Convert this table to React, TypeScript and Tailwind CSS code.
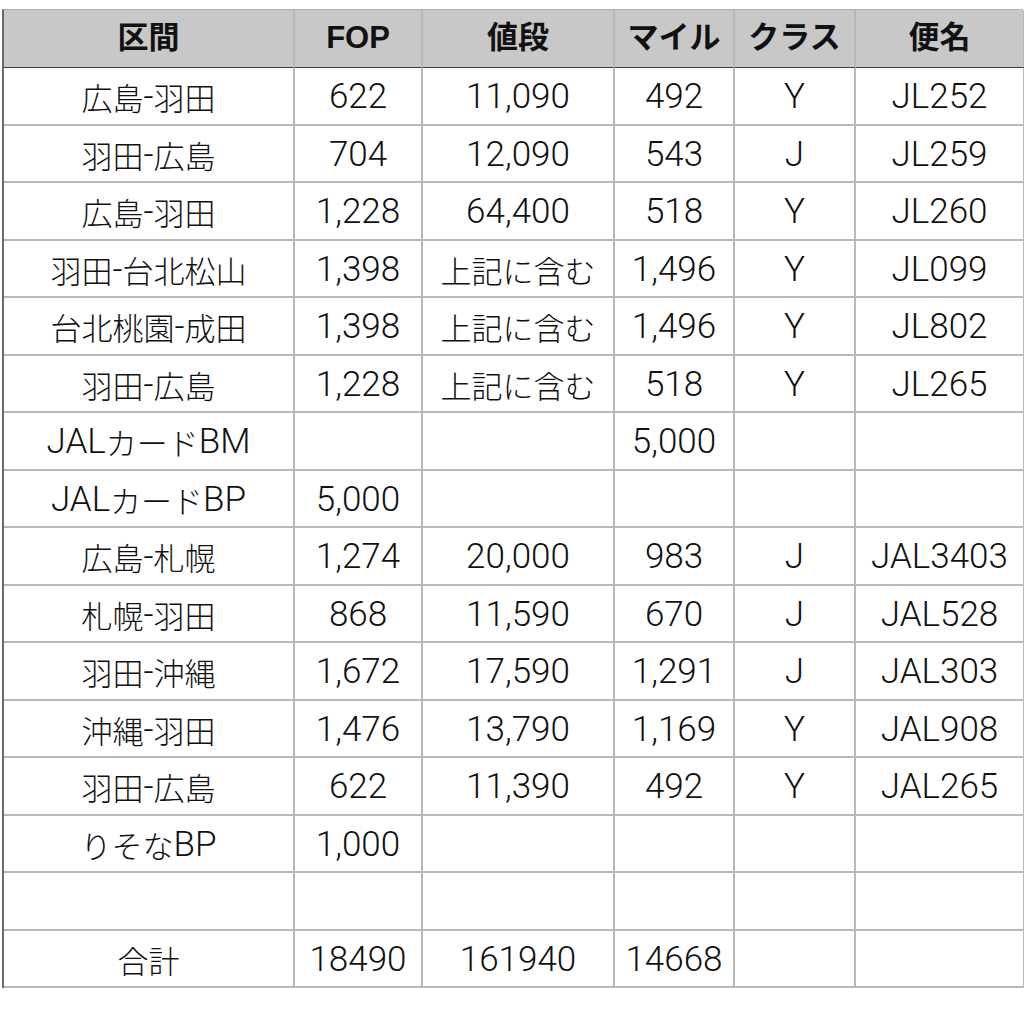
import React from "react";

const header = ["区間", "FOP", "値段", "マイル", "クラス", "便名"];

const rows: string[][] = [
  ["広島-羽田", "622", "11,090", "492", "Y", "JL252"],
  ["羽田-広島", "704", "12,090", "543", "J", "JL259"],
  ["広島-羽田", "1,228", "64,400", "518", "Y", "JL260"],
  ["羽田-台北松山", "1,398", "上記に含む", "1,496", "Y", "JL099"],
  ["台北桃園-成田", "1,398", "上記に含む", "1,496", "Y", "JL802"],
  ["羽田-広島", "1,228", "上記に含む", "518", "Y", "JL265"],
  ["JALカードBM", "", "", "5,000", "", ""],
  ["JALカードBP", "5,000", "", "", "", ""],
  ["広島-札幌", "1,274", "20,000", "983", "J", "JAL3403"],
  ["札幌-羽田", "868", "11,590", "670", "J", "JAL528"],
  ["羽田-沖縄", "1,672", "17,590", "1,291", "J", "JAL303"],
  ["沖縄-羽田", "1,476", "13,790", "1,169", "Y", "JAL908"],
  ["羽田-広島", "622", "11,390", "492", "Y", "JAL265"],
  ["りそなBP", "1,000", "", "", "", ""],
  ["", "", "", "", "", ""],
  ["合計", "18490", "161940", "14668", "", ""],
];

function Runs({ text }: { text: string }) {
  const parts = text.match(/[\u3000-\u9fff\uff00-\uffef]+|[^\u3000-\u9fff\uff00-\uffef]+/g) || [];
  return (
    <>
      {parts.map((p, i) =>
        /[\u3000-\u9fff\uff00-\uffef]/.test(p) ? (
          <span
            key={i}
            className="text-[31px] font-light"
            style={{ fontFamily: '"Noto Sans CJK JP", sans-serif' }}
          >
            {p}
          </span>
        ) : (
          <span
            key={i}
            className="text-[35px] font-light"
            style={{ fontFamily: 'Roboto, "Liberation Sans", sans-serif' }}
          >
            {p}
          </span>
        )
      )}
    </>
  );
}

export default function App() {
  return (
    <div
      className="w-[1024px] h-[1014px] bg-white pt-[9px] pl-[2px] text-[#111111]"
      style={{ fontFamily: '"Liberation Sans", "Noto Sans CJK JP", sans-serif' }}
    >
      <div className="grid grid-cols-[291px_128px_192px_120px_121px_169px] w-[1021px] border-t border-t-[#b0b0b0] border-l-2 border-l-[#6a6a6a]">
        {header.map((h, i) => (
          <div
            key={"h" + i}
            className="h-[58px] flex items-center justify-center bg-[#c8c8c8] border-r-2 border-r-[#b8b8b8] border-b border-b-[#3c3c3c] text-[31px] font-bold whitespace-nowrap"
          >
            {h}
          </div>
        ))}
        {rows.map((r, ri) =>
          r.map((c, ci) => (
            <div
              key={ri + "-" + ci}
              className="h-[57.5px] flex items-center justify-center border-r-2 border-r-[#b8b8b8] border-b-2 border-b-[#b8b8b8] leading-none whitespace-nowrap overflow-visible pt-[2px]"
            >
              <Runs text={c} />
            </div>
          ))
        )}
      </div>
    </div>
  );
}
